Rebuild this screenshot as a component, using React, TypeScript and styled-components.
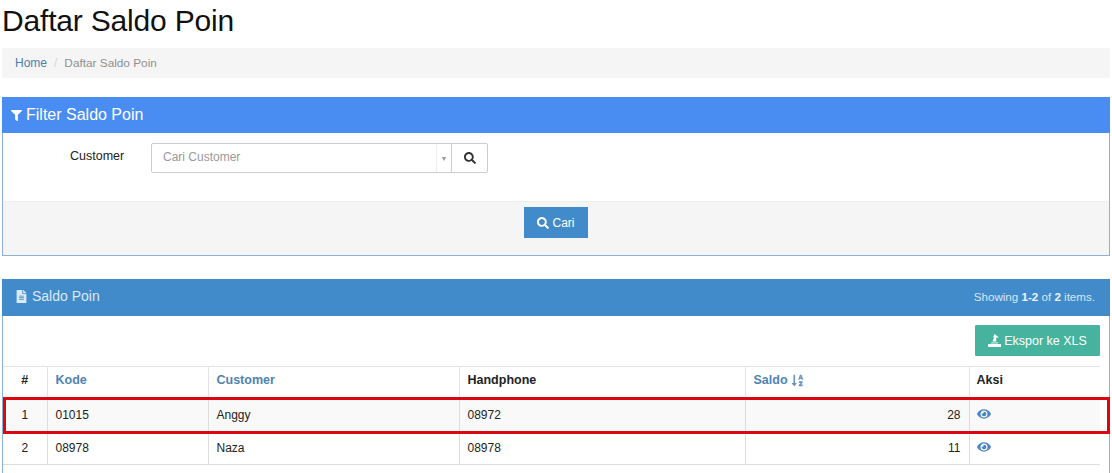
import React from 'react';
import styled, { createGlobalStyle } from 'styled-components';
import { FaEye, FaFileAlt, FaFilter, FaSearch, FaSortAlphaDown } from 'react-icons/fa';

const GlobalStyle = createGlobalStyle`
  html, body {
    margin: 0;
    padding: 0;
    background: #fff;
    font-family: "Liberation Sans", Arial, sans-serif;
    font-size: 12px;
    color: #222;
  }
  * { box-sizing: border-box; }
`;

const Page = styled.div`
  width: 1112px;
  height: 473px;
  padding: 0 2px;
  overflow: hidden;
`;

const Title = styled.h1`
  margin: 0;
  height: 48px;
  padding-top: 4px;
  font-size: 30px;
  line-height: 34px;
  font-weight: 400;
  letter-spacing: -0.18px;
  color: #111;
`;

const Breadcrumb = styled.div`
  display: flex;
  align-items: center;
  height: 30px;
  padding: 0 13px;
  background: #f5f5f5;
  color: #8f8f8f;
`;

const Crumb = styled.a`
  color: #4a7fb0;
  text-decoration: none;
`;

const Slash = styled.span`
  margin: 0 7px;
  color: #d5d5d5;
`;

const CurrentCrumb = styled.span`
  font-size: 11.8px;
`;

const Panel = styled.section<{ $tone: string; $edge: string }>`
  border: 1px solid ${(p) => p.$edge};
  border-top: 0;
  & > header {
    background: ${(p) => p.$tone};
  }
`;

const FilterPanel = styled(Panel)`
  margin-top: 19px;
  height: 159px;
`;

const ResultPanel = styled(Panel)`
  position: relative;
  margin-top: 23px;
  height: 200px;
  border-bottom: 0;
`;

const PanelHead = styled.header<{ $h: number; $lift?: number }>`
  display: flex;
  align-items: center;
  justify-content: space-between;
  height: ${(p) => p.$h}px;
  margin: 0 -1px;
  padding: 0 15px ${(p) => p.$lift ?? 0}px 9px;
  color: #fff;
`;

const HeadTitle = styled.h3<{ $size: number; $icon: number; $inset: number; $soft?: boolean }>`
  display: flex;
  align-items: center;
  gap: 4px;
  margin: 0;
  padding-left: ${(p) => p.$inset}px;
  font-size: ${(p) => p.$size}px;
  font-weight: 400;
  color: ${(p) => (p.$soft ? '#dbe9f5' : '#fff')};
  svg { font-size: ${(p) => p.$icon}px; }
`;

const Summary = styled.div`
  font-size: 11.6px;
  color: #d6e6f4;
  b { color: #eef5fb; }
`;

const FilterBody = styled.div`
  display: flex;
  align-items: flex-start;
  height: 68px;
  padding: 10px 0 0 67px;
`;

const FieldLabel = styled.label`
  width: 81px;
  font-size: 12.5px;
  line-height: 26px;
  color: #222;
`;

const Select = styled.div`
  display: flex;
  align-items: center;
  justify-content: space-between;
  width: 301px;
  height: 30px;
  border: 1px solid #ccc;
  border-radius: 2px 0 0 2px;
  padding: 0 0 2px 11px;
  color: #999;
`;

const Caret = styled.span`
  display: flex;
  align-items: center;
  justify-content: center;
  width: 15px;
  height: 28px;
  margin-bottom: -2px;
  border-left: 1px solid #eee;
  color: #999;
  font-size: 7px;
`;

const AddonButton = styled.button`
  display: flex;
  align-items: center;
  justify-content: center;
  width: 37px;
  height: 30px;
  margin-left: -1px;
  padding: 0;
  border: 1px solid #ccc;
  border-radius: 0 2px 2px 0;
  background: #fff;
  color: #333;
  font-size: 12px;
`;

const FilterFoot = styled.div`
  display: flex;
  justify-content: center;
  height: 54px;
  padding-top: 5px;
  border-top: 1px solid #eee;
  background: #f5f5f5;
`;

const Button = styled.button<{ $bg: string }>`
  display: flex;
  align-items: center;
  justify-content: center;
  gap: 3px;
  border: 1px solid ${(p) => p.$bg};
  background: ${(p) => p.$bg};
  color: #fff;
  font-family: inherit;
  font-size: 12px;
  padding: 0;
`;

const SearchButton = styled(Button)`
  width: 64px;
  height: 31px;
`;

const Toolbar = styled.div`
  display: flex;
  justify-content: flex-end;
  height: 50px;
  padding: 9px 9px 0 0;
`;

const ExportButton = styled(Button)`
  width: 125px;
  height: 31px;
  border-radius: 1px;
  font-size: 12.5px;
`;

const Table = styled.table`
  width: 1097px;
  border-collapse: collapse;
  table-layout: fixed;
  color: #222;
`;

const HeadCell = styled.th<{ $w: number }>`
  width: ${(p) => p.$w}px;
  height: 32px;
  padding: 0 8px 4px;
  border: 1px solid #e4e4e4;
  border-left-color: #ddd;
  border-bottom-width: 2px;
  text-align: left;
  font-size: 12.5px;
  font-weight: 700;
  color: #222;
  &:first-child { border-left: 0; }
  &:last-child { border-right: 0; padding-left: 7px; }
`;

const IndexHead = styled(HeadCell)`
  text-align: center;
`;

const SortLink = styled.a`
  display: inline-flex;
  align-items: center;
  gap: 3px;
  color: #4f83b3;
  text-decoration: none;
  svg { font-size: 13px; opacity: 0.85; }
`;

const Row = styled.tr<{ $odd?: boolean }>`
  background: ${(p) => (p.$odd ? '#f9f9f9' : '#fff')};
`;

const Cell = styled.td<{ $align?: string }>`
  height: 33px;
  padding: 0 8px;
  border: 1px solid #ddd;
  text-align: ${(p) => p.$align ?? 'left'};
  &:first-child { border-left: 0; }
  &:last-child { border-right: 0; padding-left: 7px; }
`;

const EyeLink = styled.a`
  display: block;
  margin-top: -2px;
  color: #4a86c0;
  font-size: 14px;
  svg { display: block; }
`;

const Highlight = styled.div`
  position: absolute;
  left: 0;
  top: 118px;
  width: 1107px;
  height: 37px;
  border: 3px solid #dc0612;
  pointer-events: none;
`;

function ExportIcon() {
  return (
    <svg width="13" height="13" viewBox="0 0 13 13" fill="#fff" aria-hidden="true">
      <path d="M6.5 0 11 3.6 8.2 3.6 8.2 7.6 4.6 7.6C4.8 5.8 5.6 4.6 7 3.6L5 3.6Z" />
      <path d="M0 10H13V13H0Z" />
      <path d="M3 8.5H10V9.4H3Z" />
    </svg>
  );
}

const rows = [
  { no: 1, kode: '01015', customer: 'Anggy', phone: '08972', saldo: 28 },
  { no: 2, kode: '08978', customer: 'Naza', phone: '08978', saldo: 11 },
];

const App: React.FC = () => {
  return (
    <Page>
      <GlobalStyle />
      <Title>Daftar Saldo Poin</Title>
      <Breadcrumb>
        <Crumb>Home</Crumb>
        <Slash>/</Slash>
        <CurrentCrumb>Daftar Saldo Poin</CurrentCrumb>
      </Breadcrumb>

      <FilterPanel $tone="#4a8df2" $edge="#8fb0d8">
        <PanelHead $h={36}>
          <HeadTitle $size={16} $icon={11} $inset={0}>
            <FaFilter /> Filter Saldo Poin
          </HeadTitle>
        </PanelHead>
        <FilterBody>
          <FieldLabel>Customer</FieldLabel>
          <Select>
            Cari Customer
            <Caret>▼</Caret>
          </Select>
          <AddonButton aria-label="Cari customer">
            <FaSearch />
          </AddonButton>
        </FilterBody>
        <FilterFoot>
          <SearchButton $bg="#428bca">
            <FaSearch /> Cari
          </SearchButton>
        </FilterFoot>
      </FilterPanel>

      <ResultPanel $tone="#428bca" $edge="#8ab4d8">
        <PanelHead $h={37} $lift={3}>
          <HeadTitle $size={14} $icon={13} $inset={4} $soft>
            <FaFileAlt /> Saldo Poin
          </HeadTitle>
          <Summary>
            Showing <b>1-2</b> of <b>2</b> items.
          </Summary>
        </PanelHead>
        <Toolbar>
          <ExportButton $bg="#45b39d">
            <ExportIcon /> Ekspor ke XLS
          </ExportButton>
        </Toolbar>
        <Table>
          <thead>
            <tr>
              <IndexHead $w={44}>#</IndexHead>
              <HeadCell $w={161}>
                <SortLink>Kode</SortLink>
              </HeadCell>
              <HeadCell $w={251}>
                <SortLink>Customer</SortLink>
              </HeadCell>
              <HeadCell $w={286}>Handphone</HeadCell>
              <HeadCell $w={224}>
                <SortLink>
                  Saldo <FaSortAlphaDown />
                </SortLink>
              </HeadCell>
              <HeadCell $w={131}>Aksi</HeadCell>
            </tr>
          </thead>
          <tbody>
            {rows.map((row) => (
              <Row key={row.no} $odd={row.no % 2 === 1}>
                <Cell $align="center">{row.no}</Cell>
                <Cell>{row.kode}</Cell>
                <Cell>{row.customer}</Cell>
                <Cell>{row.phone}</Cell>
                <Cell $align="right">{row.saldo}</Cell>
                <Cell>
                  <EyeLink aria-label="Lihat">
                    <FaEye />
                  </EyeLink>
                </Cell>
              </Row>
            ))}
          </tbody>
        </Table>
        <Highlight />
      </ResultPanel>
    </Page>
  );
};

export default App;
